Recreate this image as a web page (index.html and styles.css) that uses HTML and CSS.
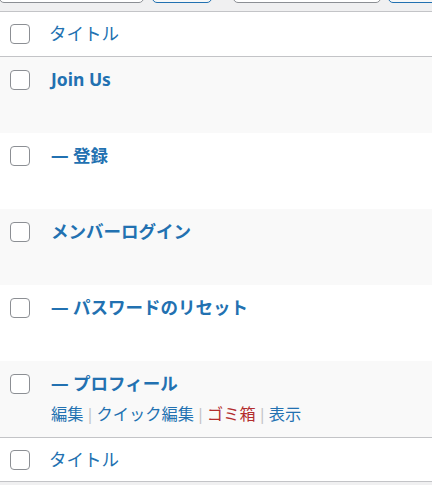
FILE: index.html
```html
<!DOCTYPE html>
<html lang="ja">
<head>
<meta charset="utf-8">
<link rel="stylesheet" href="styles.css">
</head>
<body>
<div class="tablenav">
  <div class="ctl select s1"></div>
  <div class="ctl button b1"></div>
  <div class="ctl select s2"></div>
  <div class="ctl button b2"></div>
</div>
<div class="list">
  <div class="row head">
    <div class="check"><span class="box"></span></div>
    <div class="col-title"><a class="sort">タイトル</a></div>
  </div>
  <div class="row alt">
    <div class="check"><span class="box"></span></div>
    <div class="col-title"><a class="title">Join Us</a></div>
  </div>
  <div class="row">
    <div class="check"><span class="box"></span></div>
    <div class="col-title"><a class="title">— 登録</a></div>
  </div>
  <div class="row alt">
    <div class="check"><span class="box"></span></div>
    <div class="col-title"><a class="title">メンバーログイン</a></div>
  </div>
  <div class="row">
    <div class="check"><span class="box"></span></div>
    <div class="col-title"><a class="title">— パスワードのリセット</a></div>
  </div>
  <div class="row alt">
    <div class="check"><span class="box"></span></div>
    <div class="col-title">
      <a class="title">— プロフィール</a>
      <div class="actions">
        <a class="act">編集</a><span class="sep">|</span><a class="act">クイック編集</a><span class="sep">|</span><a class="act trash">ゴミ箱</a><span class="sep">|</span><a class="act">表示</a>
      </div>
    </div>
  </div>
  <div class="row foot">
    <div class="check"><span class="box"></span></div>
    <div class="col-title"><a class="sort">タイトル</a></div>
  </div>
</div>
</body>
</html>
```
FILE: styles.css
```css
html, body {
  margin: 0;
  padding: 0;
  background: #f0f0f1;
  font-family: "Noto Sans", "Noto Sans CJK JP", sans-serif;
  color: #2271b1;
}
.tablenav {
  height: 11px;
  overflow: hidden;
  display: flex;
  align-items: flex-end;
}
.ctl {
  flex: none;
  height: 36px;
  margin-bottom: 8px;
  box-sizing: border-box;
  border-radius: 5px;
  background: #fff;
}
.select { border: 1px solid #8c8f94; }
.button { border: 1px solid #2271b1; background: #f6f7f7; }
.s1 { width: 145px; margin-left: -1px; }
.b1 { width: 60px; margin-left: 8px; }
.s2 { width: 148px; margin-left: 21px; }
.b2 { width: 60px; margin-left: 7px; }

.list {
  background: #fff;
  border-top: 1px solid #c3c4c7;
  border-bottom: 1px solid #c3c4c7;
}
.row {
  display: flex;
  height: 76px;
}
.row.alt { background: #f9f9f9; }
.row.head { height: 44px; border-bottom: 1px solid #c3c4c7; }
.row.foot { height: 43px; border-top: 1px solid #c3c4c7; }
.check {
  flex: none;
  width: 41px;
  padding: 13px 0 0 10px;
}
.head .check { padding-top: 12px; }
.foot .check { padding-top: 12px; }
.box {
  display: block;
  width: 20px;
  height: 20px;
  box-sizing: border-box;
  border: 1px solid #8c8f94;
  border-radius: 4px;
  background: #fff;
}
.col-title {
  padding-top: 10px;
  font-size: 17.5px;
  line-height: 24.5px;
}
.head .col-title, .foot .col-title {
  padding-top: 9px;
  margin-left: -2px;
}
.sort { color: #2271b1; }
.title {
  color: #2271b1;
  font-weight: 700;
}
.actions {
  margin-top: 6px;
  font-size: 16.25px;
  line-height: 24px;
  display: flex;
  align-items: center;
}
.act { color: #2271b1; }
.act.trash { color: #b32d2e; }
.sep {
  color: #c3c4c7;
  margin: 0 2px;
}
```
